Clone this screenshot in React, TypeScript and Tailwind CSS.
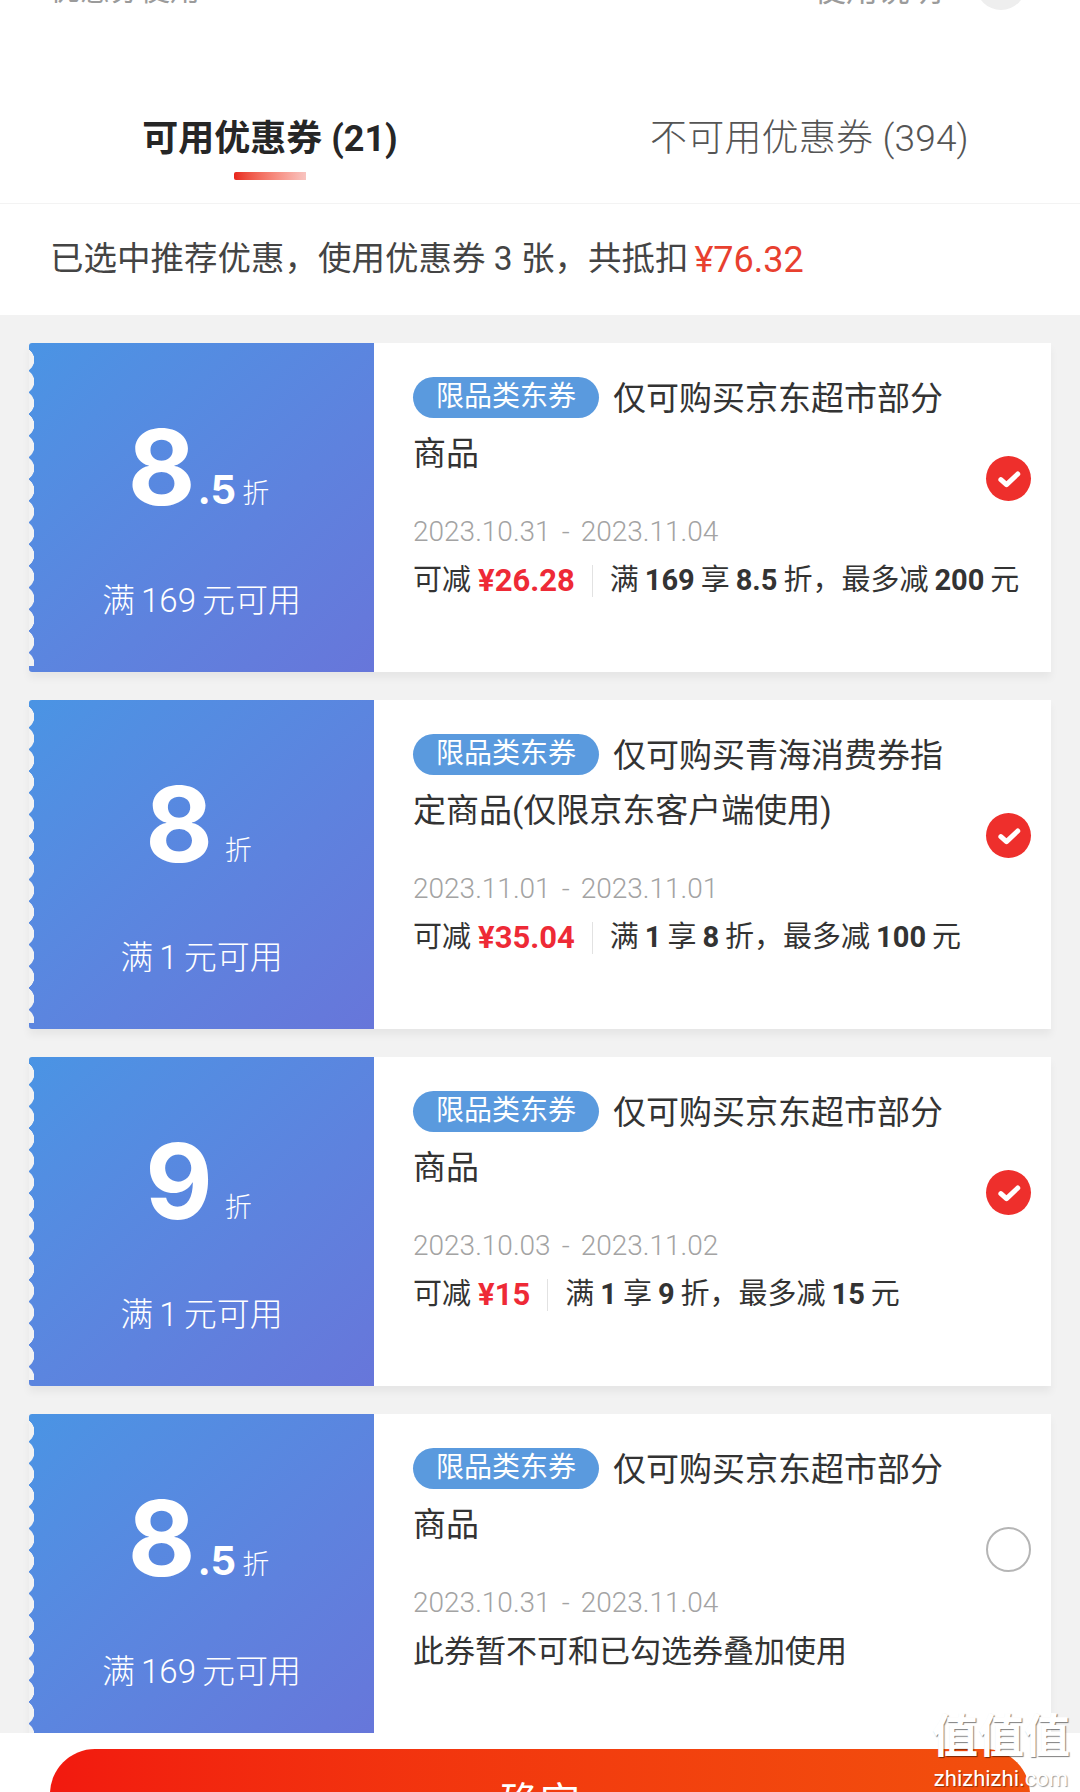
const sans = 'font-["Roboto","Noto_Sans_CJK_SC",sans-serif]'

type Coupon = {
  whole: string
  fraction?: string
  threshold: string
  title: string[]
  start: string
  end: string
  saving?: string
  rule?: { text: string; bold?: boolean }[]
  note?: string
  checked: boolean
}

const coupons: Coupon[] = [
  {
    whole: '8',
    fraction: '.5',
    threshold: '169',
    title: ['仅可购买京东超市部分', '商品'],
    start: '2023.10.31',
    end: '2023.11.04',
    saving: '¥26.28',
    rule: [
      { text: '满' },
      { text: '169', bold: true },
      { text: '享' },
      { text: '8.5', bold: true },
      { text: '折，最多减' },
      { text: '200', bold: true },
      { text: '元' },
    ],
    checked: true,
  },
  {
    whole: '8',
    threshold: '1',
    title: ['仅可购买青海消费券指', '定商品(仅限京东客户端使用)'],
    start: '2023.11.01',
    end: '2023.11.01',
    saving: '¥35.04',
    rule: [
      { text: '满' },
      { text: '1', bold: true },
      { text: '享' },
      { text: '8', bold: true },
      { text: '折，最多减' },
      { text: '100', bold: true },
      { text: '元' },
    ],
    checked: true,
  },
  {
    whole: '9',
    threshold: '1',
    title: ['仅可购买京东超市部分', '商品'],
    start: '2023.10.03',
    end: '2023.11.02',
    saving: '¥15',
    rule: [
      { text: '满' },
      { text: '1', bold: true },
      { text: '享' },
      { text: '9', bold: true },
      { text: '折，最多减' },
      { text: '15', bold: true },
      { text: '元' },
    ],
    checked: true,
  },
  {
    whole: '8',
    fraction: '.5',
    threshold: '169',
    title: ['仅可购买京东超市部分', '商品'],
    start: '2023.10.31',
    end: '2023.11.04',
    note: '此券暂不可和已勾选券叠加使用',
    checked: false,
  },
]

function CheckMark({ checked }: { checked: boolean }) {
  if (!checked) {
    return <div className="size-[45px] rounded-full border-2 border-[#b5b5b5] bg-white" />
  }
  return (
    <div className="flex size-[45px] items-center justify-center rounded-full bg-[#ee2f2c]">
      <svg viewBox="0 0 24 24" className="size-[30px]" fill="none" stroke="white" strokeWidth="4" strokeLinecap="round" strokeLinejoin="round">
        <path d="M5.5 12.5 10 16.5 19 8" />
      </svg>
    </div>
  )
}

function CouponCard({ coupon }: { coupon: Coupon }) {
  return (
    <div className="flex h-[329px] shrink-0 shadow-[0_6px_8px_rgba(0,0,0,0.05)]">
      <div className="relative flex w-[345px] shrink-0 flex-col items-center rounded-l-[3px] bg-linear-to-br from-[#4a94e4] to-[#6776da] text-white">
        {/* scalloped tear edge */}
        <div className="absolute inset-y-[6px] left-0 w-[6px] bg-[radial-gradient(circle_at_-7px_50%,#f2f2f2_12px,transparent_12.5px)] bg-size-[8px_21.7px]" />
        <div className="mt-[80px] flex h-[88px] items-end pr-[6px]">
          <span className='font-["Inter"] text-[104px] leading-[88px] font-bold'>{coupon.whole}</span>
          {coupon.fraction && <span className='font-["Inter"] mb-[-1px] ml-[2px] text-[40px] leading-[44px] font-bold'>{coupon.fraction}</span>}
          <span className={`${coupon.fraction ? 'ml-[6px]' : 'ml-[12px]'} mb-[-1px] text-[27px] leading-[36px] font-light`}>折</span>
        </div>
        <div className="mt-[68px] text-[33px] leading-[44px] font-light whitespace-nowrap">
          满<span className="mx-[6px]">{coupon.threshold}</span>元可用
        </div>
      </div>
      <div className="relative flex-1 bg-white pt-[32px] pl-[39px]">
        <div className="flex h-[44px] items-center">
          <span className="flex h-[41px] w-[186px] items-center justify-center rounded-full bg-[#5a9ade] text-[28px] text-white">限品类东券</span>
          <span className="mt-[3px] ml-[14px] text-[33px] text-[#333]">{coupon.title[0]}</span>
        </div>
        <div className="mt-[13px] h-[44px] text-[33px] leading-[44px] text-[#333]">{coupon.title[1]}</div>
        <div className="mt-[36px] text-[28px] leading-[40px] font-light text-[#a3a3a3]">
          {coupon.start}
          <span className="mx-[11px]">-</span>
          {coupon.end}
        </div>
        {coupon.note ? (
          <div className="mt-[9px] text-[31px] leading-[40px] text-[#333]">{coupon.note}</div>
        ) : (
          <div className="mt-[9px] flex h-[40px] items-center text-[29px] text-[#333]">
            <span>可减</span>
            <span className="ml-[7px] text-[31px] font-bold text-[#ee2a36]">{coupon.saving}</span>
            <span className="mx-[17px] h-[32px] w-px bg-[#e2e2e2]" />
            <span className="whitespace-nowrap">
              {coupon.rule?.map((part, i) =>
                part.bold ? (
                  <b key={i} className="mx-[6px] font-bold">
                    {part.text}
                  </b>
                ) : (
                  <span key={i}>{part.text}</span>
                ),
              )}
            </span>
          </div>
        )}
        <div className="absolute top-[113px] right-[20px]">
          <CheckMark checked={coupon.checked} />
        </div>
      </div>
    </div>
  )
}

export default function App() {
  return (
    <div className={`${sans} relative flex h-[1792px] w-[1080px] flex-col overflow-hidden bg-white`}>
      {/* page header, scrolled mostly out of view */}
      <div className="flex h-[10px] shrink-0 items-end justify-between pr-[54px] pl-[50px] text-[#9b9b9b]">
        <span className="text-[30px] leading-[40px] whitespace-nowrap">优惠券使用</span>
        <div className="flex items-end gap-[34px]">
          <span className="text-[32px] leading-[40px] whitespace-nowrap">使用说明</span>
          <span className="size-[50px] shrink-0 rounded-full bg-[#eeeeee]" />
        </div>
      </div>

      <div className="mt-[94px] flex h-[100px] shrink-0 border-b border-[#f3f3f3]">
        <div className="relative w-[540px] pt-[10px] text-center">
          <div className="text-[36px] leading-[50px] font-bold text-[#262626]">可用优惠券 (21)</div>
          <div className="absolute top-[68px] left-[234px] h-[8px] w-[72px] rounded-l-[2px] bg-linear-to-r from-[#e8231a] to-[#f8c4c0]" />
        </div>
        <div className="w-[540px] pt-[10px] pl-[110px] text-[37px] leading-[50px] font-light tracking-[0.2px] text-[#555]">不可用优惠券 (394)</div>
      </div>

      <div className="flex h-[111px] shrink-0 items-center pl-[50px] text-[33.5px] whitespace-pre text-[#444]">
        已选中推荐优惠，使用优惠券 3 张，共抵扣<span className="ml-[6px] text-[36px] text-[#e8402f]">¥76.32</span>
      </div>

      <div className="flex h-[1418px] shrink-0 flex-col gap-[28px] overflow-hidden bg-[#f2f2f2] pt-[28px] pr-[29px] pl-[29px]">
        {coupons.map((coupon, i) => (
          <CouponCard key={i} coupon={coupon} />
        ))}
      </div>

      <div className="flex-1 bg-white px-[50px] pt-[16px]">
        <div className="flex h-[90px] justify-center rounded-t-[45px] bg-linear-to-r from-[#f2190f] to-[#f2500d] pt-[29px] text-[40px] leading-[50px] text-white">
          确定
        </div>
      </div>

      {/* site watermark */}
      <div className="absolute top-[1706px] right-[10px] flex flex-col items-center text-white">
        <span className="text-[46px] leading-[60px] font-bold [text-shadow:1px_1px_1px_rgba(0,0,0,0.5)]">值值值</span>
        <span className="text-[22px] leading-[26px] [text-shadow:1px_1px_1px_rgba(0,0,0,0.4)]">zhizhizhi.com</span>
      </div>
    </div>
  )
}
